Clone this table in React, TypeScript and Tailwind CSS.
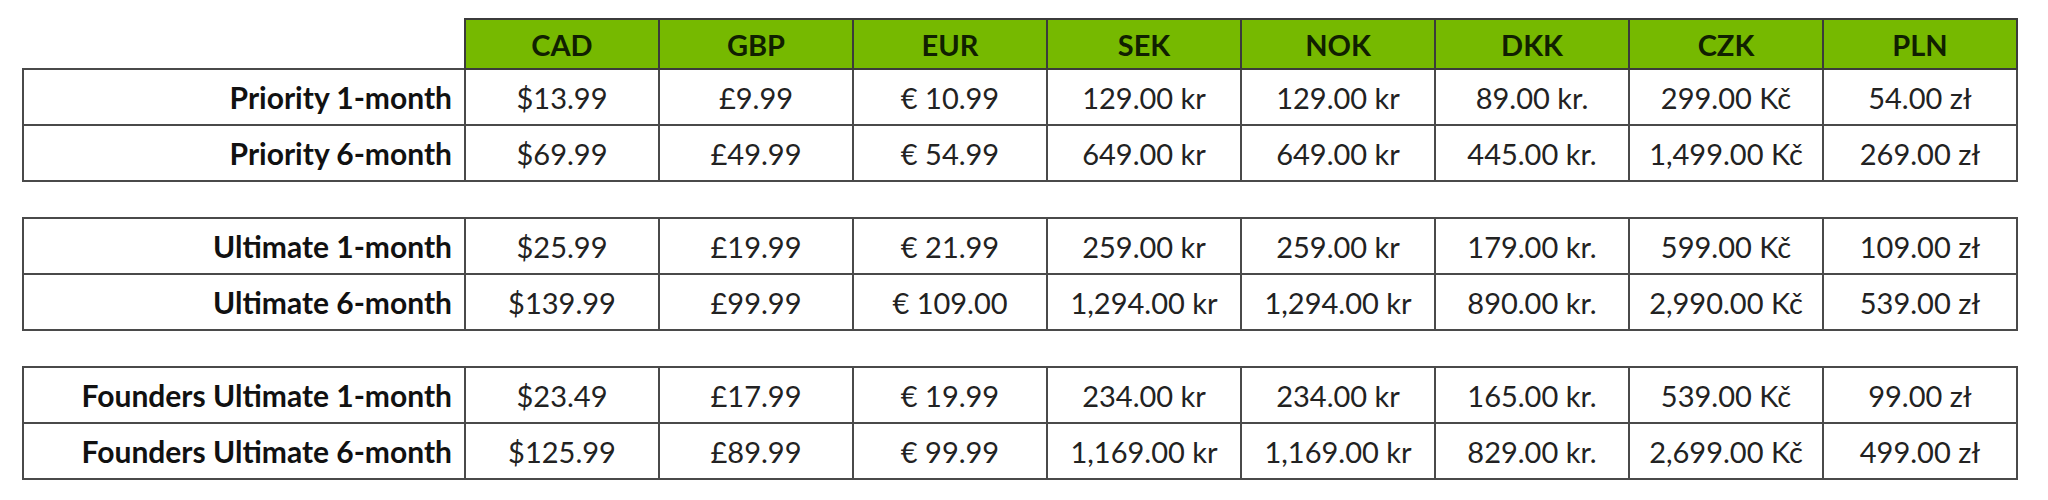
const CURRENCIES = ["CAD", "GBP", "EUR", "SEK", "NOK", "DKK", "CZK", "PLN"];

const GROUPS = [
  [
    ["Priority 1-month", "$13.99", "£9.99", "€ 10.99", "129.00 kr", "129.00 kr", "89.00 kr.", "299.00 Kč", "54.00 zł"],
    ["Priority 6-month", "$69.99", "£49.99", "€ 54.99", "649.00 kr", "649.00 kr", "445.00 kr.", "1,499.00 Kč", "269.00 zł"],
  ],
  [
    ["Ultimate 1-month", "$25.99", "£19.99", "€ 21.99", "259.00 kr", "259.00 kr", "179.00 kr.", "599.00 Kč", "109.00 zł"],
    ["Ultimate 6-month", "$139.99", "£99.99", "€ 109.00", "1,294.00 kr", "1,294.00 kr", "890.00 kr.", "2,990.00 Kč", "539.00 zł"],
  ],
  [
    ["Founders Ultimate 1-month", "$23.49", "£17.99", "€ 19.99", "234.00 kr", "234.00 kr", "165.00 kr.", "539.00 Kč", "99.00 zł"],
    ["Founders Ultimate 6-month", "$125.99", "£89.99", "€ 99.99", "1,169.00 kr", "1,169.00 kr", "829.00 kr.", "2,699.00 Kč", "499.00 zł"],
  ],
];

function Cols() {
  return (
    <colgroup>
      <col className="w-[442px]" />
      {CURRENCIES.map((c) => (
        <col key={c} className="w-[194px]" />
      ))}
    </colgroup>
  );
}

function PriceRows({ rows }: { rows: string[][] }) {
  return (
    <>
      {rows.map((row) => (
        <tr key={row[0]} className="h-[56px]">
          <td className="border-2 border-[#4a4a4a] pr-[12px] text-right text-[30px] font-bold text-[#111]">{row[0]}</td>
          {row.slice(1).map((v, i) => (
            <td key={i} className="border-2 border-[#4a4a4a] text-center text-[#222]">
              {v}
            </td>
          ))}
        </tr>
      ))}
    </>
  );
}

export default function App() {
  return (
    <div className="min-h-[500px] w-[2048px] bg-white pt-[18px] pl-[22px] font-['Lato','Open_Sans',sans-serif] text-[29px] leading-none">
      <table className="table-fixed border-collapse">
        <Cols />
        <thead>
          <tr className="h-[50px]">
            <th />
            {CURRENCIES.map((c) => (
              <th key={c} className="border-2 border-[#3b3b3b] bg-[#76b900] text-center font-bold text-[#102000]">
                {c}
              </th>
            ))}
          </tr>
        </thead>
        <tbody>
          <PriceRows rows={GROUPS[0]} />
        </tbody>
      </table>

      {GROUPS.slice(1).map((g, i) => (
        <table key={i} className="mt-[35px] table-fixed border-collapse">
          <Cols />
          <tbody>
            <PriceRows rows={g} />
          </tbody>
        </table>
      ))}
    </div>
  );
}
